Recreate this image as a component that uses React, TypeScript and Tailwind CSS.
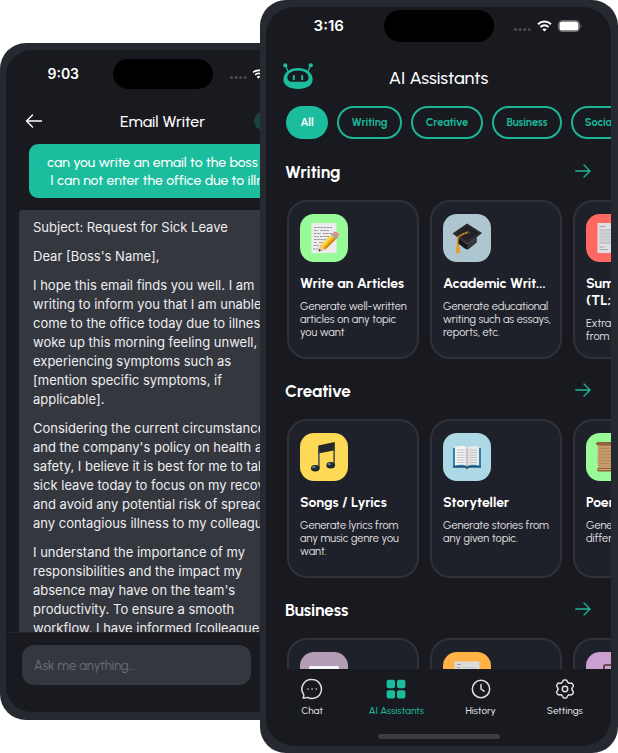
import React from "react";

const urban = "font-['Urbanist','Lato',sans-serif]";
const system = "font-['Inter','Liberation_Sans',sans-serif]";

function WifiIcon({ className }: { className: string }) {
  return (
    <svg viewBox="0 0 15 12" className={className} fill="none" stroke="#fff" strokeWidth="2" aria-hidden="true">
      <path d="M1 4.2C4.8.7 10.2.7 14 4.2" />
      <path d="M3.4 7c2.4-2.2 5.8-2.2 8.2 0" />
      <path d="M7.5 11.6 5.2 9.2c1.4-1.1 3.2-1.1 4.6 0Z" fill="#fff" stroke="none" />
    </svg>
  );
}

function SignalDots() {
  return (
    <svg viewBox="0 0 17 3" className="h-[3px] w-[17px] shrink-0" fill="#4b4c50" aria-hidden="true">
      <circle cx="1.5" cy="1.5" r="1.5" />
      <circle cx="6.1" cy="1.5" r="1.5" />
      <circle cx="10.7" cy="1.5" r="1.5" />
      <circle cx="15.3" cy="1.5" r="1.5" />
    </svg>
  );
}

function BatteryIcon() {
  return (
    <svg viewBox="0 0 24 12" className="h-3 w-6 shrink-0" aria-hidden="true">
      <rect x="0.5" y="0.5" width="21" height="11" rx="3.5" fill="none" stroke="#6d6e72" />
      <rect x="1.5" y="1.5" width="19" height="9" rx="2.6" fill="#fff" />
      <path d="M22.6 4.2c1.3.6 1.3 3 0 3.6Z" fill="#6d6e72" />
    </svg>
  );
}

function RobotLogo() {
  return (
    <svg viewBox="0 0 30 26" className="h-[26px] w-[30px]" fill="#1cbd9e" aria-label="Robot logo" role="img">
      <circle cx="2.2" cy="2.3" r="2.1" />
      <circle cx="27.8" cy="2.3" r="2.1" />
      <path d="M2.6 3 5.3 9M27.4 3 24.7 9" stroke="#1cbd9e" strokeWidth="1.3" />
      <path d="M15 5C7 5 .4 9.6.4 16.600c0 6.300 6.400 9.300 14.600 9.300s14.600-3 14.600-9.300C29.600 9.600 23 5 15 5Z" />
      <path d="M15 7.400c-6.300 0-10.600 2.900-10.600 7 0 3 2 4.400 5 4.400h11.200c3 0 5-1.400 5-4.400 0-4.100-4.300-7-10.600-7Z" fill="#191a1f" />
      <rect x="9.800" y="12" width="2" height="5.200" rx="1" />
      <rect x="18.200" y="12" width="2" height="5.200" rx="1" />
    </svg>
  );
}

function ArrowIcon() {
  return (
    <svg viewBox="0 0 16 14" className="h-3.5 w-4" fill="none" stroke="#1cb697" strokeWidth="1.3" strokeLinecap="round" strokeLinejoin="round" aria-hidden="true">
      <path d="M.8 7h14.200M9 1l6 6-6 6" />
    </svg>
  );
}

function MemoArt() {
  return (
    <svg viewBox="0 0 48 48" className="size-12">
      <rect x="11.500" y="9" width="25" height="30" fill="#ecebee" />
      <path d="M14 13.500h18M14 16.500h4m2 0h9M14 19.500h7m2 0h9M14 22.500h5m1 0h9M14 25.500h12M14 28.500h3m2 0h6M14 31.500h5M13 35h7" stroke="#8b8b91" strokeWidth=".9" strokeDasharray="2.500 .7" />
      <path d="m18.600 37.500 1.800-6.500 12-11.500 4.600 4.600-11.700 11.400Z" fill="#f3b71e" />
      <path d="m20.400 31 12-11.500 1.600 1.600L22.400 33Z" fill="#ffd95a" />
      <path d="m25.300 35.500 11.700-11.400-1.400-1.400L24 34.200Z" fill="#ce8508" />
      <path d="m18.600 37.500 1.800-6.500 4.900 4.500Z" fill="#edc58f" />
      <path d="m18.600 37.500.7-2.500 1.800 1.700Z" fill="#333" />
      <path d="m31.300 20.600 1.900-1.800 4.600 4.600-1.900 1.800Z" fill="#9aa3ab" />
      <path d="m33.200 18.800 1-.8c2.300-1.200 5.500 2 4.400 4.500l-.8.9Z" fill="#ee7f8b" />
    </svg>
  );
}

function CapArt() {
  return (
    <svg viewBox="0 0 48 48" className="size-12">
      <path d="M15 22v8c4 1 6 5.500 10 5.500l8.500-7v-9Z" fill="#17171a" />
      <path d="M24.500 31v4.500l9-7V22Z" fill="#35363a" />
      <path d="m9.500 19.500 14.500-10 15 9.500-14.500 11.500Z" fill="#2b2b2f" />
      <path d="m9.500 19.500 15 10.200L39 19l-14.500 11.800Z" fill="#5a5b60" />
      <path d="m14 19 10-7.500 11 7-10.500 8Z" fill="#222226" />
      <ellipse cx="24.500" cy="18.500" rx="2.400" ry="1.300" fill="#4e4e53" />
      <path d="M24 18.800c-4 1-8.300 3-9.200 5.400V32" fill="none" stroke="#d18a1b" strokeWidth="1.700" strokeDasharray="2.500 .3" />
      <path d="M13.700 31h2.500l1 7.500c-1 .9-3.300.9-4.300 0Z" fill="#e59a22" />
    </svg>
  );
}

function PaperArt() {
  return (
    <svg viewBox="0 0 48 48" className="size-12">
      <rect x="11.500" y="9" width="25" height="30" fill="#dfdfe1" />
      <path d="M13.500 12.500h6M13.500 33h5M13.500 35.500h8" stroke="#a6a7aa" />
      <rect x="13.500" y="15" width="21" height="15" fill="#c5c6c9" />
      <path d="M13.500 18h21m-21 3h21m-21 3h21m-21 3h21" stroke="#dadbdd" />
    </svg>
  );
}

function MusicArt() {
  return (
    <svg viewBox="0 0 48 48" className="size-12">
      <path d="M18.300 12.500 34.800 9v8.300L18.300 20.500Z" fill="#25262c" />
      <path d="M18.900 16v19M34.100 14v18.500" stroke="#34404a" strokeWidth="1.400" />
      <ellipse cx="15.300" cy="35.300" rx="4.300" ry="3.200" fill="#1d2830" />
      <ellipse cx="30.700" cy="32.300" rx="4.300" ry="3.200" fill="#1d2830" />
      <ellipse cx="13.900" cy="34.200" rx="1.800" ry="1.100" fill="#5e7f90" />
      <ellipse cx="29.300" cy="31.200" rx="1.800" ry="1.100" fill="#5e7f90" />
    </svg>
  );
}

function BookArt() {
  return (
    <svg viewBox="0 0 48 48" className="size-12">
      <path d="M10 15h28v19.500H26l-2 1.200-2-1.200H10Z" fill="#2d7fae" />
      <path d="M10 33h12l2 1 2-1h12v1.500H26l-2 1.200-2-1.200H10Z" fill="#1b4e70" />
      <path d="M12 14c4-1.300 9-1.300 12 .5V33c-3-1.500-8-1.500-12-.5Z" fill="#f4f4f3" />
      <path d="M36 14c-4-1.300-9-1.300-12 .5V33c3-1.500 8-1.500 12-.5Z" fill="#e9e9e8" />
      <path d="M22.600 14v18.500h2.800V14L24 15Z" fill="#c6c7c8" />
      <path d="M14 17h7.500M14 19.500h7.500M14 22h7.500M14 24.500h7.500M14 27h7.500M14 29.500h7.500M26.500 17H34m-7.500 2.500H34M26.500 22H34m-7.500 2.500H34M26.500 27H34m-7.500 2.500H34" stroke="#b4b5b8" strokeWidth=".8" />
      <path d="M22.500 34.300h3l-.5 1.700h-2Z" fill="#5d5a2c" />
    </svg>
  );
}

function ScrollArt() {
  return (
    <svg viewBox="0 0 48 48" className="size-12">
      <path d="M12 10h25l-1 14 1 13H12l-.5-13Z" fill="#c69a6a" />
      <path d="M13 15.500h22M13 18.500h22M13 21.500h22M13 24.500h22M13 27.500h22M13 30.500h22" stroke="#b08557" strokeWidth=".8" />
      <rect x="10" y="9" width="28" height="3.600" rx="1.800" fill="#8e623a" />
      <rect x="11" y="35" width="27" height="3.600" rx="1.800" fill="#8e623a" />
      <path d="M12 36.500h25" stroke="#d2aa78" />
    </svg>
  );
}

function LaptopArt() {
  return (
    <svg viewBox="0 0 48 48" className="size-12">
      <rect x="9" y="14" width="30" height="19" rx="1.500" fill="#f5f5f7" />
      <rect x="11" y="17" width="26" height="14" fill="#4b4f58" />
      <path d="M6 33h36l-2 3H8Z" fill="#c9cbd0" />
    </svg>
  );
}

function NewsArt() {
  return (
    <svg viewBox="0 0 48 48" className="size-12">
      <rect x="11.500" y="9.500" width="25" height="29" fill="#dcdcda" />
      <path d="M14 12.500h4M14 15.500h3" stroke="#a2a2a2" />
      <path d="M19 15.500h15M14 18.500h20M14 21.500h20M14 24.500h20" stroke="#c6c6c4" />
    </svg>
  );
}

function CaseArt() {
  return (
    <svg viewBox="0 0 48 48" className="size-12">
      <path d="M18 18v-3.500q0-1.500 1.500-1.500h9q1.500 0 1.500 1.500V18" fill="none" stroke="#4c2f22" strokeWidth="1.700" />
      <rect x="10" y="17" width="28" height="19" rx="2" fill="#7a4a30" />
    </svg>
  );
}

const gearTooth = "M7.500 4.940Q8.600 4.300 8.800 3.200Q9 2 10.200 2H11.800Q13 2 13.200 3.200Q13.400 4.300 14.500 4.940";

function GearIcon() {
  return (
    <svg viewBox="0 0 22 22" className="size-[22px]" fill="none" stroke="currentColor" strokeWidth="1.500" strokeLinecap="round" aria-hidden="true">
      <path d={gearTooth} />
      <path d={gearTooth} transform="rotate(60 11 11)" />
      <path d={gearTooth} transform="rotate(120 11 11)" />
      <path d={gearTooth} transform="rotate(180 11 11)" />
      <path d={gearTooth} transform="rotate(240 11 11)" />
      <path d={gearTooth} transform="rotate(300 11 11)" />
      <circle cx="11" cy="11" r="2.700" />
    </svg>
  );
}

type Card = { title: string; text: string; tile: string; art: React.ReactNode };

const sections: { name: string; cards: Card[] }[] = [
  {
    name: "Writing",
    cards: [
      { title: "Write an Articles", text: "Generate well-written\narticles on any topic\nyou want", tile: "bg-[#98fb98]", art: <MemoArt /> },
      { title: "Academic Writ...", text: "Generate educational\nwriting such as essays,\nreports, etc.", tile: "bg-[#aec6cf]", art: <CapArt /> },
      { title: "Summarize\n(TL;DR)", text: "Extract key points\nfrom long texts.", tile: "bg-[#ff6961]", art: <PaperArt /> },
    ],
  },
  {
    name: "Creative",
    cards: [
      { title: "Songs / Lyrics", text: "Generate lyrics from\nany music genre you\nwant.", tile: "bg-[#fdd955]", art: <MusicArt /> },
      { title: "Storyteller", text: "Generate stories from\nany given topic.", tile: "bg-[#add8e6]", art: <BookArt /> },
      { title: "Poems", text: "Generate poems in\ndifferent styles.", tile: "bg-[#98fb98]", art: <ScrollArt /> },
    ],
  },
  {
    name: "Business",
    cards: [
      { title: "", text: "", tile: "bg-[#b39eb5]", art: <LaptopArt /> },
      { title: "", text: "", tile: "bg-[#ffb347]", art: <NewsArt /> },
      { title: "", text: "", tile: "bg-[#cb9fcf]", art: <CaseArt /> },
    ],
  },
];

const emailParagraphs = [
  "Subject: Request for Sick Leave",
  "Dear [Boss's Name],",
  "I hope this email finds you well. I am\nwriting to inform you that I am unable\ncome to the office today due to illness\nwoke up this morning feeling unwell,\nexperiencing symptoms such as\n[mention specific symptoms, if\napplicable].",
  "Considering the current circumstances\nand the company's policy on health and\nsafety, I believe it is best for me to take\nsick leave today to focus on my recovery\nand avoid any potential risk of spreading\nany contagious illness to my colleagues",
  "I understand the importance of my\nresponsibilities and the impact my\nabsence may have on the team's\nproductivity. To ensure a smooth\nworkflow, I have informed [colleague's",
];

function ChatPhone() {
  return (
    <div className="flex h-full w-[125%] flex-col rounded-[26px] bg-[#262930] px-1.5 pt-[7px] pb-2">
      <div className="flex min-h-0 flex-1 flex-col overflow-hidden rounded-[26px] bg-[#191a1f]">
        <div className={`grid grid-cols-[1fr_100px_1fr] items-center pt-[9px] text-white ${system}`}>
          <span className="pl-2 text-center text-sm font-semibold">9:03</span>
          <div className="h-[30px] rounded-full bg-black" />
          <div className="flex items-center gap-[5px] pl-[17px]">
            <div className="pt-[7px]"><SignalDots /></div>
            <WifiIcon className="h-2.5 w-[13px] shrink-0" />
            <BatteryIcon />
          </div>
        </div>
        <header className="mt-[19px] grid grid-cols-[1fr_auto_1fr] items-center px-[19px]">
          <button aria-label="Back" className="w-[18px]">
            <svg viewBox="0 0 18 14" className="h-3.5 w-[18px]" fill="none" stroke="#fff" strokeWidth="1.400" strokeLinecap="round" strokeLinejoin="round">
              <path d="M16.500 7H1.500M7.500 1l-6 6 6 6" />
            </svg>
          </button>
          <h2 className="pt-0.5 text-base leading-6 font-medium text-white">Email Writer</h2>
          <div className="flex justify-end">
            <div className="h-[18px] w-[46px] rounded-full bg-[#19433f]" />
          </div>
        </header>
        <div className="mt-2.5 flex min-h-0 flex-1 flex-col overflow-hidden">
          <p className="mr-3 ml-[23px] shrink-0 rounded-[9px] bg-[#1cbd9e] pt-2.5 pb-2 pl-[18px] text-sm leading-[18px] font-medium whitespace-pre text-white">
            {"can you write an email to the boss that\n I can not enter the office due to illness"}
          </p>
          <article className={`mt-3 mr-3 ml-[13px] flex shrink-0 flex-col gap-2.5 rounded-[4px] bg-[#35373f] px-3.5 pt-2 text-[13px] leading-[19px] whitespace-pre text-[#eeeeef] ${system}`}>
            {emailParagraphs.map((p) => (
              <p key={p}>{p}</p>
            ))}
          </article>
        </div>
        <div className="flex border-t border-[#23252a] px-4 pt-3 pb-[27px]">
          <input
            aria-label="Message"
            placeholder="Ask me anything..."
            className="h-10 w-[229px] rounded-xl bg-[#35373f] px-3 text-[13px] text-white placeholder:text-[#6c6e76]"
          />
        </div>
      </div>
    </div>
  );
}

function AssistantsPhone() {
  return (
    <div className="flex h-full flex-col rounded-[26px] bg-[#262930] px-[7px] py-[7px] pl-1.5">
      <div className="flex min-h-0 flex-1 flex-col overflow-hidden rounded-[28px] bg-[#191a1f]">
        <div className={`grid grid-cols-[1fr_110px_1fr] items-center pt-[3px] text-white ${system}`}>
          <span className="pl-2 text-center text-[15px] font-semibold">3:16</span>
          <div className="h-8 rounded-full bg-black" />
          <div className="flex items-center gap-1.5 pl-5">
            <div className="pt-[7px]"><SignalDots /></div>
            <WifiIcon className="h-3 w-[15px] shrink-0" />
            <BatteryIcon />
          </div>
        </div>
        <header className="mt-[21px] grid grid-cols-[30px_1fr_30px] items-start px-[17px]">
          <RobotLogo />
          <h1 className="pt-[3px] text-center text-lg leading-6 font-medium text-white">AI Assistants</h1>
        </header>
        <div className="mt-4 flex shrink-0 gap-[9px] overflow-hidden pl-5 text-[11px] font-bold text-[#1cb697]">
          <button className="h-[33px] w-[42px] shrink-0 rounded-full bg-[#1cbd9e] pt-0.5 text-white">All</button>
          <button className="h-[33px] w-[65px] shrink-0 rounded-full border-2 border-[#1cb697] pt-0.5">Writing</button>
          <button className="h-[33px] w-[72px] shrink-0 rounded-full border-2 border-[#1cb697] pt-0.5">Creative</button>
          <button className="h-[33px] w-[70px] shrink-0 rounded-full border-2 border-[#1cb697] pt-0.5">Business</button>
          <button className="h-[33px] w-[92px] shrink-0 rounded-full border-2 border-[#1cb697] pt-0.5">Social Media</button>
        </div>
        <main className="flex min-h-0 flex-1 flex-col gap-5 overflow-hidden pt-[21px]">
          {sections.map((s) => (
            <section key={s.name} className="shrink-0">
              <div className="flex h-6 items-center justify-between pr-5 pl-[19px]">
                <h2 className="text-[17px] leading-6 font-bold text-white">{s.name}</h2>
                <button aria-label={`See all ${s.name}`} className="pb-[3px]"><ArrowIcon /></button>
              </div>
              <div className="mt-4 flex gap-[11px] overflow-hidden pl-[21px]">
                {s.cards.map((c, i) => (
                  <button key={i} aria-label={c.title || `${s.name} assistant ${i + 1}`} className="flex h-[159px] w-[132px] shrink-0 flex-col items-start overflow-hidden rounded-[20px] border-2 border-[#303138] bg-[#1f212a] px-[11px] pt-3 text-left">
                    <span className={`size-12 shrink-0 overflow-hidden rounded-[14px] ${c.tile}`}>{c.art}</span>
                    <span className="mt-[13px] text-[14px] leading-[17px] font-bold whitespace-pre text-white">{c.title}</span>
                    <span className="mt-2 text-[11px] leading-[13px] whitespace-pre text-[#e3e3e5]">{c.text}</span>
                  </button>
                ))}
              </div>
            </section>
          ))}
        </main>
        <nav className="grid shrink-0 grid-cols-4 px-1 pt-[9px] text-[10px] leading-3 font-medium text-[#dededf]">
          <button className="flex flex-col items-center gap-[5px]">
            <svg viewBox="0 0 22 22" className="size-[22px]" fill="none" stroke="currentColor" strokeWidth="1.500" strokeLinejoin="round">
              <path d="M11 1.500a9.500 9.500 0 1 1-4.500 17.900c-1.200.6-2.700.9-4.500.6.9-1 .9-2.300.6-3.600A9.500 9.500 0 0 1 11 1.500Z" />
              <path d="M6.500 11h.9m3.200 0h.9m3.200 0h.9" strokeWidth="1.800" />
            </svg>
            Chat
          </button>
          <button className="flex flex-col items-center gap-[5px] text-[#1cb697]" aria-current="page">
            <svg viewBox="0 0 22 22" className="size-[22px]" fill="#1cbd9e">
              <rect x="1.600" y="1.800" width="8.400" height="8.400" rx="2" />
              <rect x="12" y="1.800" width="8.400" height="8.400" rx="2" />
              <rect x="1.600" y="12.200" width="8.400" height="8.400" rx="2" />
              <rect x="12" y="12.200" width="8.400" height="8.400" rx="2" />
            </svg>
            AI Assistants
          </button>
          <button className="flex flex-col items-center gap-[5px]">
            <svg viewBox="0 0 22 22" className="size-[22px]" fill="none" stroke="currentColor" strokeWidth="1.500" strokeLinecap="round" strokeLinejoin="round">
              <circle cx="11" cy="11" r="8.700" />
              <path d="M11 6.500V11l3 2.200" />
            </svg>
            History
          </button>
          <button className="flex flex-col items-center gap-[5px]">
            <GearIcon />
            Settings
          </button>
        </nav>
        <div className="mx-auto mt-[17px] mb-[7px] h-[5px] w-[122px] shrink-0 rounded-full bg-[#3c3d40]" />
      </div>
    </div>
  );
}

export default function App() {
  return (
    <div className={`grid h-screen grid-cols-[260fr_358fr] grid-rows-[100%] overflow-hidden bg-white ${urban}`}>
      <div className="min-w-0 overflow-hidden pt-[43px] pb-[33px]">
        <ChatPhone />
      </div>
      <div className="min-w-0">
        <AssistantsPhone />
      </div>
    </div>
  );
}
